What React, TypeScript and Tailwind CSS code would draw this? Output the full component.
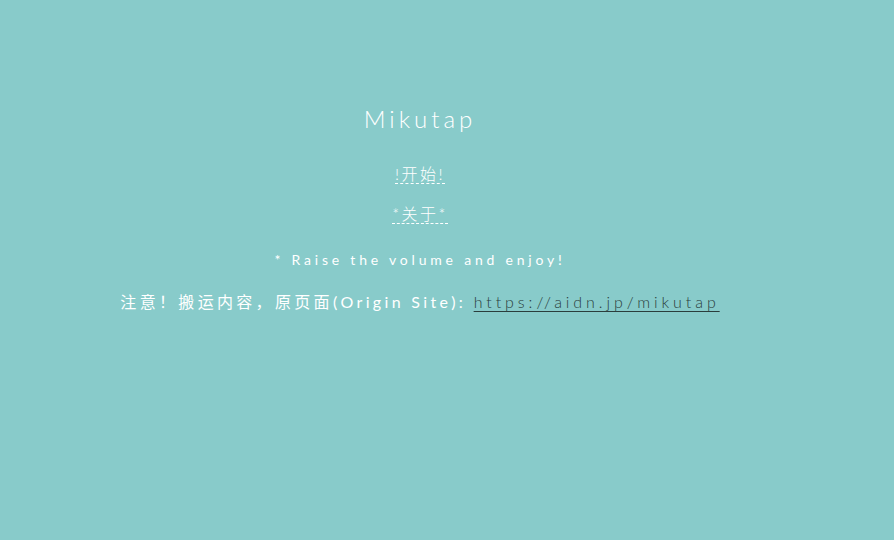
export default function App() {
  const font = { fontFamily: '"Lato", "Noto Sans CJK SC", sans-serif' };
  return (
    <div className="w-[894px] h-[540px] bg-[#88cbca] text-white overflow-hidden" style={font}>
      <div className="w-[840px] flex flex-col items-center text-center">
        <h1 className="mt-[104px] text-[24px] leading-[30px] tracking-[4px] font-light">Mikutap</h1>
        <a className="mt-[31px] text-[16px] leading-[18px] tracking-[2.5px] border-b border-dashed border-white font-light">!开始!</a>
        <a className="mt-[21px] text-[16px] leading-[18px] tracking-[2.5px] border-b border-dashed border-white font-light">*关于*</a>
        <p className="mt-[27px] text-[14px] leading-[18px] tracking-[3.8px]">* Raise the volume and enjoy!</p>
        <p className="mt-[23px] text-[16px] leading-[20px] tracking-[3.33px]">
          注意！搬运内容，原页面(Origin Site): <span className="text-[#2a3d3c] underline underline-offset-[3px] tracking-[3.94px] font-light">https://aidn.jp/mikutap</span>
        </p>
      </div>
    </div>
  );
}
